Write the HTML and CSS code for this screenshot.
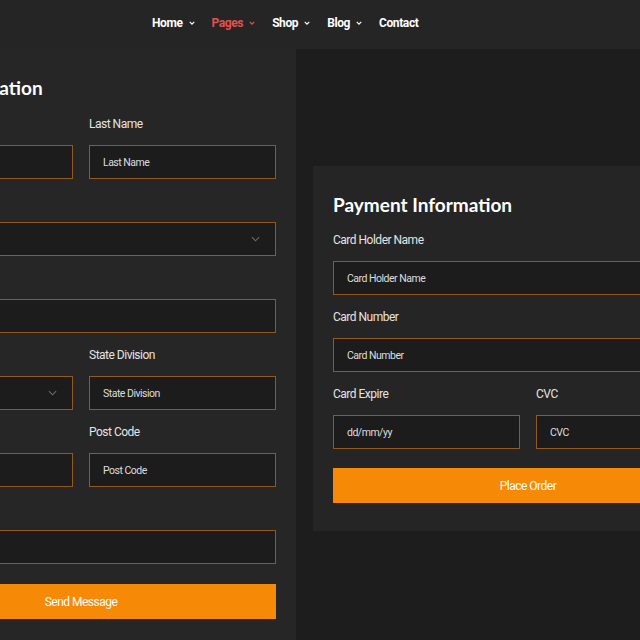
FILE: index.html
```html
<!DOCTYPE html>
<html lang="en">
<head>
    <meta charset="UTF-8">
    <title>Checkout</title>
    <link rel="stylesheet" href="styles.css">
</head>
<body>

<header class="topbar">
    <nav class="menu">
        <a href="#" class="menu-item">Home <svg class="caret" viewBox="0 0 8 5"><path d="M1 1l3 3 3-3"/></svg></a>
        <a href="#" class="menu-item active">Pages <svg class="caret" viewBox="0 0 8 5"><path d="M1 1l3 3 3-3"/></svg></a>
        <a href="#" class="menu-item">Shop <svg class="caret" viewBox="0 0 8 5"><path d="M1 1l3 3 3-3"/></svg></a>
        <a href="#" class="menu-item">Blog <svg class="caret" viewBox="0 0 8 5"><path d="M1 1l3 3 3-3"/></svg></a>
        <a href="#" class="menu-item">Contact</a>
    </nav>
</header>

<main class="checkout">
    <section class="billing">
        <h2>Billing Information</h2>
        <form class="grid">
            <div class="field">
                <label>First Name</label>
                <input type="text" placeholder="First Name">
            </div>
            <div class="field">
                <label>Last Name</label>
                <input type="text" placeholder="Last Name">
            </div>
            <div class="field wide">
                <label>Country</label>
                <div class="select">
                    <span>Select Country</span>
                    <svg class="chev" viewBox="0 0 10 6"><path d="M1 1l4 4 4-4"/></svg>
                </div>
            </div>
            <div class="field wide">
                <label>Address</label>
                <input type="text" placeholder="Address">
            </div>
            <div class="field">
                <label>City</label>
                <div class="select">
                    <span>Select City</span>
                    <svg class="chev" viewBox="0 0 10 6"><path d="M1 1l4 4 4-4"/></svg>
                </div>
            </div>
            <div class="field">
                <label>State Division</label>
                <input type="text" placeholder="State Division">
            </div>
            <div class="field">
                <label>Zip Code</label>
                <input type="text" placeholder="Zip Code">
            </div>
            <div class="field">
                <label>Post Code</label>
                <input type="text" placeholder="Post Code">
            </div>
            <div class="field wide">
                <label>Phone</label>
                <input type="text" placeholder="Phone">
            </div>
            <button type="button" class="btn wide">Send Message</button>
        </form>
    </section>

    <section class="payment">
        <h2>Payment Information</h2>
        <form class="grid">
            <div class="field wide">
                <label>Card Holder Name</label>
                <input type="text" placeholder="Card Holder Name">
            </div>
            <div class="field wide">
                <label>Card Number</label>
                <input type="text" placeholder="Card Number">
            </div>
            <div class="field">
                <label>Card Expire</label>
                <input type="text" placeholder="dd/mm/yy">
            </div>
            <div class="field">
                <label>CVC</label>
                <input type="text" placeholder="CVC">
            </div>
            <button type="button" class="btn wide pay">Place Order</button>
        </form>
    </section>
</main>

</body>
</html>
```

FILE: styles.css
```css
body {
    margin: 0;
    background-color: #1d1d1d;
    font-family: Roboto, "Liberation Sans", sans-serif;
    color: #e6e6e6;
    overflow: hidden;
}
.topbar {
    height: 49px;
    background-color: #252525;
    display: flex;
    align-items: center;
    padding-left: 152px;
    box-sizing: border-box;
    padding-bottom: 3px;
}
.menu {
    display: flex;
    gap: 17px;
}
.menu-item {
    color: #fff;
    text-decoration: none;
    font-size: 12px;
    font-weight: 700;
    letter-spacing: -0.4px;
    display: flex;
    align-items: center;
    gap: 6px;
}
.menu-item.active {
    color: #e4514d;
}
.caret {
    width: 6px;
    height: 4px;
    fill: none;
    stroke: currentColor;
    stroke-width: 1.6;
}
.checkout {
    display: flex;
    align-items: flex-start;
    margin-left: -134px;
}
.billing {
    width: 390px;
    flex: none;
    background-color: #262626;
    padding: 28px 20px 40px;
}
.payment {
    width: 390px;
    flex: none;
    background-color: #252525;
    margin: 117px 0 0 17px;
    padding: 28px 20px 28px;
}
h2 {
    margin: 0 0 15px;
    font-family: Lato, "Open Sans", sans-serif;
    font-size: 19px;
    line-height: 22px;
    font-weight: 700;
    color: #fff;
}
.payment h2 {
    margin-bottom: 14px;
}
.grid {
    display: grid;
    grid-template-columns: 1fr 1fr;
    column-gap: 16px;
}
.wide {
    grid-column: 1 / 3;
}
.field {
    margin-bottom: 12px;
}
label {
    display: block;
    font-size: 12px;
    letter-spacing: -0.5px;
    line-height: 21px;
    margin-bottom: 10px;
    color: #e4e4e4;
}
input, .select {
    display: block;
    box-sizing: border-box;
    width: 100%;
    height: 34px;
    margin: 0;
    padding: 0 13px;
    background-color: #1c1c1c;
    border: 1px solid #93581f;
    font-family: Roboto, "Liberation Sans", sans-serif;
    font-size: 10.5px;
    letter-spacing: -0.5px;
    color: #ddd;
    outline: none;
}
input::placeholder {
    color: #dedede;
}
.select {
    display: flex;
    align-items: center;
    justify-content: space-between;
}
.chev {
    width: 9px;
    height: 6px;
    fill: none;
    stroke: #6c6c6c;
    stroke-width: 1.2;
    margin-right: 2px;
}
.btn {
    height: 35px;
    margin-top: 8px;
    border: none;
    background-color: #f68a06;
    color: #fff;
    font-family: Roboto, "Liberation Sans", sans-serif;
    font-size: 12px;
    letter-spacing: -0.5px;
}
.btn.pay {
    margin-top: 7px;
}
```
